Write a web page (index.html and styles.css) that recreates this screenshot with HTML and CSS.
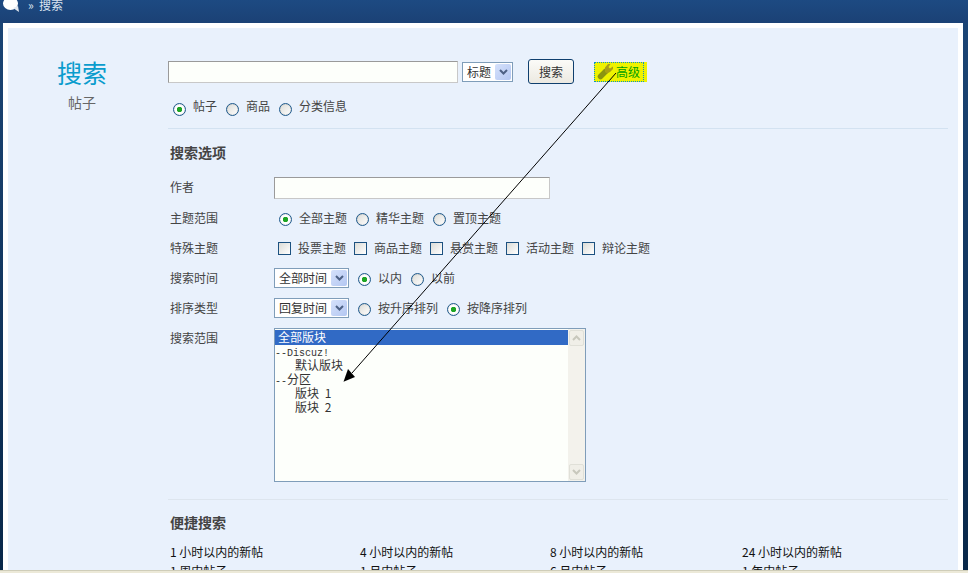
FILE: index.html
```html
<!DOCTYPE html>
<html lang="zh-CN">
<head>
<meta charset="utf-8">
<title>搜索</title>
<link rel="stylesheet" href="styles.css">
</head>
<body>
<header class="topbar">
  <svg class="bubble" width="16" height="12" viewBox="0 0 16 12"><ellipse cx="7.5" cy="3.500" rx="7.5" ry="6.5" fill="#fff"/><path d="M10 8 L16 12 L15 6 Z" fill="#e4e9f0"/></svg>
  <span class="crumb">»  搜索</span>
</header>
<div class="frame">
  <div class="panel">
    <aside class="side">
      <h1 class="title">搜索</h1>
      <p class="subtitle">帖子</p>
    </aside>
    <main class="main">
      <div class="searchbar">
        <div class="textbox wide"></div>
        <div class="sel sel-type"><span class="sel-val">标题</span><span class="sel-btn"><svg width="9" height="6" viewBox="0 0 9 6"><path d="M1 1 L4.5 4.5 L8 1" fill="none" stroke="#4d6185" stroke-width="2"/></svg></span></div>
        <button class="btn" type="button">搜索</button>
        <a class="adv"><span class="adv-in"><svg width="18" height="17" viewBox="0 0 18 17"><path d="M3.500 13.500 L8.500 8.500" stroke="#8b9410" stroke-width="5.5" stroke-linecap="round"/><path d="M8 9 L8 4.500 L11 1 L13.500 1 L11.500 4 L13 5.500 L16 3.500 L16 6 L13 9 L10 10.500 Z" fill="#a99f16"/></svg>高级</span></a>
      </div>
      <div class="radios scope">
        <span class="radio on"></span><span class="opt">帖子</span>
        <span class="radio"></span><span class="opt">商品</span>
        <span class="radio"></span><span class="opt">分类信息</span>
      </div>
      <hr class="rule rule-first">
      <h2 class="heading">搜索选项</h2>
      <div class="row">
        <label class="lbl lbl-up">作者</label>
        <div class="textbox author"></div>
      </div>
      <div class="row">
        <label class="lbl">主题范围</label>
        <div class="radios pad5">
          <span class="radio on"></span><span class="opt">全部主题</span>
          <span class="radio"></span><span class="opt">精华主题</span>
          <span class="radio"></span><span class="opt">置顶主题</span>
        </div>
      </div>
      <div class="row">
        <label class="lbl">特殊主题</label>
        <div class="radios pad4">
          <span class="check"></span><span class="opt">投票主题</span>
          <span class="check"></span><span class="opt">商品主题</span>
          <span class="check"></span><span class="opt">悬赏主题</span>
          <span class="check"></span><span class="opt">活动主题</span>
          <span class="check"></span><span class="opt">辩论主题</span>
        </div>
      </div>
      <div class="row">
        <label class="lbl">搜索时间</label>
        <div class="sel sel-long"><span class="sel-val">全部时间</span><span class="sel-btn"><svg width="9" height="6" viewBox="0 0 9 6"><path d="M1 1 L4.5 4.5 L8 1" fill="none" stroke="#4d6185" stroke-width="2"/></svg></span></div>
        <div class="radios pad9">
          <span class="radio on"></span><span class="opt">以内</span>
          <span class="radio"></span><span class="opt">以前</span>
        </div>
      </div>
      <div class="row">
        <label class="lbl">排序类型</label>
        <div class="sel sel-long"><span class="sel-val">回复时间</span><span class="sel-btn"><svg width="9" height="6" viewBox="0 0 9 6"><path d="M1 1 L4.5 4.5 L8 1" fill="none" stroke="#4d6185" stroke-width="2"/></svg></span></div>
        <div class="radios pad9">
          <span class="radio"></span><span class="opt">按升序排列</span>
          <span class="radio on"></span><span class="opt">按降序排列</span>
        </div>
      </div>
      <div class="row row-list">
        <label class="lbl lbl-top">搜索范围</label>
        <div class="listbox">
          <div class="items">
            <div class="item picked">全部版块</div>
            <div class="item"><span class="mono">--Discuz!</span></div>
            <div class="item indent">默认版块</div>
            <div class="item"><span class="mono">--</span>分区</div>
            <div class="item indent">版块 <span class="digit">1</span></div>
            <div class="item indent">版块 <span class="digit">2</span></div>
          </div>
          <div class="scroll">
            <span class="sbtn"><svg width="9" height="6" viewBox="0 0 9 6"><path d="M1 5 L4.5 1.500 L8 5" fill="none" stroke="#c8c8bd" stroke-width="2"/></svg></span>
            <span class="sbtn"><svg width="9" height="6" viewBox="0 0 9 6"><path d="M1 1 L4.5 4.5 L8 1" fill="none" stroke="#c8c8bd" stroke-width="2"/></svg></span>
          </div>
        </div>
      </div>
      <hr class="rule rule-second">
      <h2 class="heading quick">便捷搜索</h2>
      <div class="quicklinks">
        <a>1 小时以内的新帖</a><a>4 小时以内的新帖</a><a>8 小时以内的新帖</a><a>24 小时以内的新帖</a>
        <a>1 周内帖子</a><a>1 月内帖子</a><a>6 月内帖子</a><a>1 年内帖子</a>
      </div>
    </main>
  </div>
</div>
<div class="statusedge"></div>
<svg class="arrow" width="968" height="573" viewBox="0 0 968 573">
  <path d="M616 73 L352 373" stroke="#000" stroke-width="1" fill="none"/>
  <path d="M343.500 381.700 L348 369 L355 377 Z" fill="#000"/>
</svg>
</body>
</html>
```
FILE: styles.css
```css
* { box-sizing: border-box; }
html, body { margin: 0; height: 573px; overflow: hidden; }
body {
  display: flex;
  flex-direction: column;
  font: 12px/14px "Noto Sans CJK SC", "Liberation Sans", sans-serif;
  color: #444;
  background: linear-gradient(#1c4677, #082749);
}
.topbar {
  height: 23px;
  flex: none;
  display: flex;
  align-items: flex-start;
  overflow: hidden;
  background: linear-gradient(#1d4a82, #1b4175);
}
.bubble { margin: 0 0 0 3px; flex: none; }
.crumb { margin: -2px 0 0 9px; color: #dbe4f0; line-height: 14px; white-space: pre; }
.frame {
  flex: 1;
  min-height: 0;
  margin: 0 5px 0 3px;
  border: 5px solid #fff;
  border-bottom: 0;
  display: flex;
  background: #e9f1fc;
}
.panel { flex: 1; display: flex; overflow: hidden; min-width: 0; }
.side { width: 160px; flex: none; text-align: center; padding-top: 27px; padding-right: 12px; }
.title { margin: 0; font-size: 25px; line-height: 34px; font-weight: 400; color: #0a9ccd; }
.subtitle { margin: 3px 0 0; font-size: 14px; line-height: 20px; color: #666; }
.main { width: 780px; flex: none; padding-top: 31px; }
.searchbar { display: flex; align-items: center; height: 25px; }
.textbox { background: #fdfffb; border: 1px solid; border-color: #9a9a9a #c8c8c8 #c8c8c8 #9a9a9a; }
.wide { width: 290px; height: 22px; }
.sel { display: flex; align-items: center; justify-content: space-between; height: 20px; background: #fff; border: 1px solid #7f9db9; color: #333; padding: 0 1px 0 4px; }
.sel-type { width: 51px; margin-left: 4px; }
.sel-long { width: 75px; }
.sel-val { white-space: nowrap; }
.sel-btn { width: 16px; height: 16px; border-radius: 2px; background: linear-gradient(135deg, #d5e1fb, #b4c7f2); display: flex; align-items: center; justify-content: center; flex: none; }
.btn { width: 46px; height: 25px; margin-left: 15px; padding: 0; font: inherit; color: #333; background: linear-gradient(#fbfbf8, #ece9e1); border: 1px solid #0f3f6e; border-radius: 3px; }
.adv { display: block; width: 53px; height: 20px; margin-left: 20px; background: #eef200; }
.adv-in { display: flex; align-items: center; width: 50px; height: 20px; padding-left: 3px; color: #00a000; border: 1px dotted #0a8fc8; white-space: nowrap; }
.adv-in svg { flex: none; margin: 0 1px 0 -1px; }
.radios { display: flex; align-items: center; }
.scope { height: 24px; margin-top: 12px; padding-left: 5px; }
.scope .opt { padding-bottom: 4px; }
.radio, .check { flex: none; width: 13px; height: 13px; margin-top: 3px; background: linear-gradient(135deg, #dcdcd7, #fff); border: 1px solid #1f5a8c; }
.radio { border-radius: 50%; box-shadow: inset 0 0 1px #999; }
.radio.on { background: radial-gradient(circle, #1ea524 0 2.5px, #fff 3px); }
.check { margin-top: 0; background: linear-gradient(135deg, #dcdcd7, #fff); border-color: #1c5180; }
.opt { margin: 0 9px 0 7px; white-space: nowrap; }
.pad5 { padding-left: 5px; }
.pad4 { padding-left: 4px; }
.pad4 .opt { margin-right: 8px; }
.pad9 { padding-left: 9px; }
.rule { border: 0; height: 1px; margin: 0; background: #d3e2f1; }
.rule-first { margin-top: 8px; }
.rule-second { margin-top: 17px; background: #dde5ee; }
.heading { margin: 13px 0 11px 2px; font-size: 14px; line-height: 20px; font-weight: 700; color: #444; }
.heading.quick { margin-top: 12px; margin-bottom: 13px; }
.row { display: flex; align-items: center; height: 30px; }
.lbl { width: 106px; padding-left: 2px; flex: none; }
.lbl-up { padding-bottom: 2px; }
.author { width: 276px; height: 22px; }
.row-list { align-items: flex-start; height: 159px; padding-top: 5px; }
.lbl-top { padding-top: 3px; }
.listbox { width: 312px; height: 154px; display: flex; background: #fdfffb; border: 1px solid #7f9db9; }
.items { flex: 1; padding-top: 1px; color: #333; }
.item { height: 14px; line-height: 12px; white-space: pre; }
.item.picked { height: 15px; line-height: 14px; padding-left: 3px; background: #316ac5; color: #fff; }
.indent { padding-left: 20px; }
.mono { font: 10px/12px "Liberation Mono", monospace; }
.digit { margin-left: 3px; }
.scroll { width: 17px; flex: none; display: flex; flex-direction: column; justify-content: space-between; padding: 1px; background: #f3f2ec; }
.sbtn { height: 16px; display: flex; align-items: center; justify-content: center; background: #f0efe8; border: 1px solid #e0e0d8; border-radius: 2px; }
.quicklinks { display: grid; grid-template-columns: 190px 190px 192px 190px; grid-auto-rows: 19px; padding-left: 2px; color: #111; white-space: nowrap; }
.statusedge { height: 3px; flex: none; background: #ece9d8; border-top: 1px solid #cfcdb9; }
.arrow { position: absolute; left: 0; top: 0; pointer-events: none; }
```
